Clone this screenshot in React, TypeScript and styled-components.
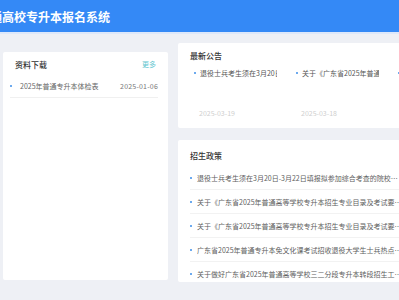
import React from "react";
import styled, { createGlobalStyle } from "styled-components";

const GlobalStyle = createGlobalStyle`
  html, body {
    margin: 0;
    padding: 0;
    width: 399px;
    height: 300px;
    overflow: hidden;
    background-color: #eef0f5;
    font-family: "Noto Sans CJK SC", "Noto Sans", sans-serif;
  }
`;

const Page = styled.div`
  width: 399px;
  height: 300px;
  overflow: hidden;
`;

const Header = styled.header`
  height: 32px;
  background-color: #3489f6;
  border-bottom: 2px solid #dde8fa;
  display: flex;
  align-items: center;
  overflow: hidden;
`;

const Title = styled.h1`
  margin: 0 0 0 -58px;
  font-size: 12px;
  font-weight: 700;
  color: #ffffff;
  white-space: nowrap;
`;

const Main = styled.main`
  display: grid;
  grid-template-columns: 165px 236px;
  column-gap: 10px;
  padding: 9px 0 0 3px;
  align-items: start;
`;

const LeftColumn = styled.div`
  padding-top: 9px;
`;

const RightColumn = styled.div`
  display: flex;
  flex-direction: column;
  gap: 12px;
`;

const Card = styled.section<{ $height: number }>`
  background-color: #ffffff;
  height: ${(p) => p.$height}px;
  box-sizing: border-box;
  padding: 0 12px;
  border-radius: 2px;
  overflow: hidden;
`;

const CardHead = styled.div<{ $top?: number }>`
  height: 22px;
  display: flex;
  align-items: center;
  justify-content: space-between;
  padding-top: ${(p) => p.$top ?? 1}px;
`;

const CardTitle = styled.h2`
  margin: 0;
  font-size: 8px;
  font-weight: 500;
  color: #333;
`;

const More = styled.span`
  font-size: 7px;
  color: #62c6cf;
`;

const Dot = styled.i`
  display: inline-block;
  width: 2px;
  height: 2px;
  border-radius: 50%;
  background-color: #3c8ee8;
  flex: none;
`;

const FileRow = styled.div`
  display: flex;
  align-items: center;
  gap: 8px;
  height: 22px;
  margin: 0 -2px 0 -5px;
  border-bottom: 1px solid #f0f0f0;
  font-size: 7px;
  color: #666;
  white-space: nowrap;
`;

const FileName = styled.span`
  flex: 1;
`;

const FileDate = styled.span`
  color: #777;
  letter-spacing: 0.2px;
`;

const NoticeList = styled.div`
  display: flex;
  padding-left: 4px;
  margin-top: 2px;
`;

const Notice = styled.div`
  width: 102px;
  flex: none;
  display: flex;
  flex-direction: column;
  height: 50px;
  justify-content: space-between;
`;

const NoticeTitle = styled.div`
  display: flex;
  align-items: center;
  gap: 4px;
  font-size: 7px;
  color: #555;
`;

const NoticeText = styled.span`
  width: 77px;
  white-space: nowrap;
  overflow: hidden;
`;

const NoticeDate = styled.span`
  font-size: 7px;
  color: #cfcfcf;
  padding-left: 5px;
`;

const PolicyList = styled.div`
  display: flex;
  flex-direction: column;
`;

const PolicyRow = styled.div`
  display: flex;
  align-items: center;
  gap: 5px;
  height: 23px;
  border-bottom: 1px solid #f2f2f2;
  font-size: 7px;
  color: #606060;
  &:last-child {
    border-bottom: none;
  }
`;

const PolicyText = styled.span`
  flex: 1;
  min-width: 0;
  white-space: nowrap;
  overflow: hidden;
  text-overflow: ellipsis;
`;

const notices = [
  { title: "退役士兵考生须在3月20日-3月22日填报拟参加综合考查的院校", date: "2025-03-19" },
  { title: "关于《广东省2025年普通高等学校专升本招生专业目录及考试要求》的补充说明", date: "2025-03-18" },
  { title: "广东省2025年普通专升本免文化课考试", date: "2025-03-15" },
];

const policies = [
  "退役士兵考生须在3月20日-3月22日填报拟参加综合考查的院校及专业的通知",
  "关于《广东省2025年普通高等学校专升本招生专业目录及考试要求》的补充说明",
  "关于《广东省2025年普通高等学校专升本招生专业目录及考试要求》的通知",
  "广东省2025年普通专升本免文化课考试招收退役大学生士兵热点问答",
  "关于做好广东省2025年普通高等学校三二分段专升本转段招生工作的通知",
];

function App() {
  return (
    <Page>
      <GlobalStyle />
      <Header>
        <Title>广东省普通高校专升本报名系统</Title>
      </Header>
      <Main>
        <LeftColumn>
          <Card $height={228}>
            <CardHead>
              <CardTitle>资料下载</CardTitle>
              <More>更多</More>
            </CardHead>
            <FileRow>
              <Dot />
              <FileName>2025年普通专升本体检表</FileName>
              <FileDate>2025-01-06</FileDate>
            </FileRow>
          </Card>
        </LeftColumn>
        <RightColumn>
          <Card $height={85}>
            <CardHead>
              <CardTitle>最新公告</CardTitle>
            </CardHead>
            <NoticeList>
              {notices.map((n) => (
                <Notice key={n.date}>
                  <NoticeTitle>
                    <Dot />
                    <NoticeText>{n.title}</NoticeText>
                  </NoticeTitle>
                  <NoticeDate>{n.date}</NoticeDate>
                </Notice>
              ))}
            </NoticeList>
          </Card>
          <Card $height={142}>
            <CardHead $top={4}>
              <CardTitle>招生政策</CardTitle>
            </CardHead>
            <PolicyList>
              {policies.map((p, i) => (
                <PolicyRow key={i}>
                  <Dot />
                  <PolicyText>{p}</PolicyText>
                </PolicyRow>
              ))}
            </PolicyList>
          </Card>
        </RightColumn>
      </Main>
    </Page>
  );
}

export default App;
